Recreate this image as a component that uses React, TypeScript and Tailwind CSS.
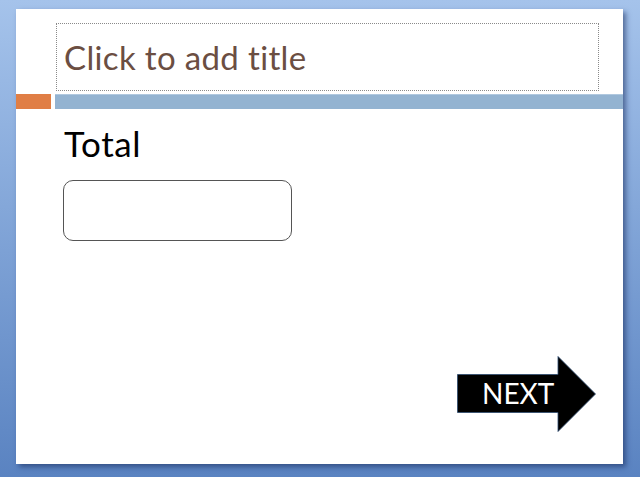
export default function App() {
  return (
    <div
      className="h-[477px] w-[640px] overflow-hidden bg-gradient-to-b from-[#a5c3eb] to-[#5a83c1] pt-[9px]"
      style={{ fontFamily: "Lato, 'Open Sans', sans-serif" }}
    >
      {/* slide */}
      <div className="ml-[16px] flex h-[455px] w-[607px] flex-col bg-white shadow-[3px_3px_5px_rgba(20,40,90,0.55)]">
        {/* title placeholder */}
        <div className="ml-[40px] mt-[14px] h-[68px] w-[543px] border border-dotted border-[#8a8a8a] pl-[7px] pt-[17px]">
          <p className="text-[33px] leading-none tracking-[0.35px] text-[#6b4e42] [font-variant-ligatures:none]">
            Click to add title
          </p>
        </div>

        {/* accent bars */}
        <div className="mt-[3px] flex h-[15px] gap-[4px]">
          <div className="w-[35px] bg-[#e07e45]" />
          <div className="flex-1 border-t border-[#b0c8df] bg-[#93b3d1]" />
        </div>

        <p className="ml-[48px] mt-[17px] text-[35px] leading-none tracking-[0.6px] text-black">Total</p>

        <div className="ml-[47px] mt-[19px] h-[61px] w-[229px] rounded-[10px] border border-[#555]" />

        {/* next arrow */}
        <div className="relative ml-[441px] mt-[115px] h-[76px] w-[139px]">
          <svg width="139" height="76" viewBox="0 0 139 76" className="absolute left-0 top-0">
            <polygon
              points="0.5,18.5 101,18.5 101,0.5 138.5,38 101,75.5 101,56.5 0.5,56.5"
              fill="#000"
              stroke="#2c4a6e"
              strokeWidth="0.8"
            />
          </svg>
          <span className="absolute left-[25px] top-[23px] text-[28px] leading-none text-white">NEXT</span>
        </div>
      </div>
    </div>
  );
}
